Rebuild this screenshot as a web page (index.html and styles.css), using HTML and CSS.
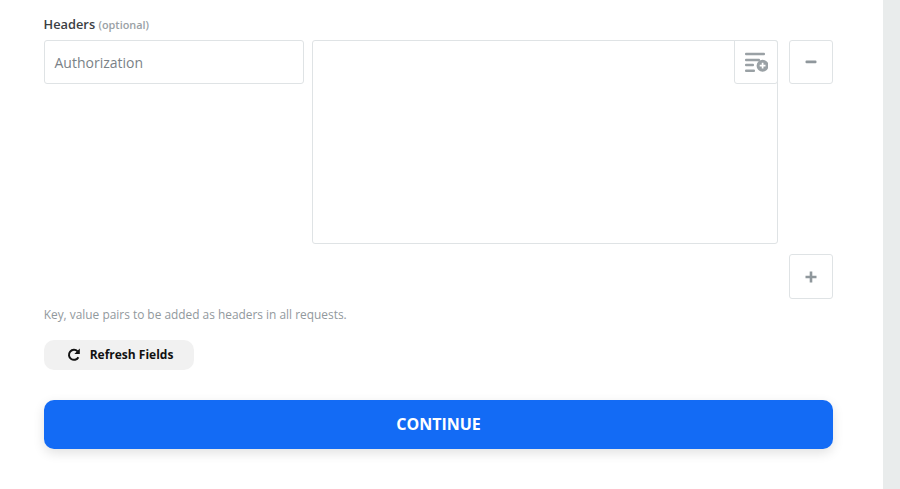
FILE: index.html
```html
<!DOCTYPE html>
<html lang="en">
<head>
<meta charset="utf-8">
<title>Headers</title>
<link rel="stylesheet" href="styles.css">
</head>
<body>
<div class="page">
  <main class="main">
    <div class="label">Headers <span class="optional">(optional)</span></div>
    <div class="row">
      <div class="key">Authorization</div>
      <div class="value">
        <button class="insert" aria-label="Insert field">
          <svg width="24" height="22" viewBox="0 0 24 22">
            <g fill="#9aa1a5">
              <rect x="1" y="1.8" width="20" height="2.4" rx="1"/>
              <rect x="1" y="7.8" width="15" height="2.4" rx="1"/>
              <rect x="1" y="12.8" width="9" height="2.4" rx="1"/>
              <rect x="1" y="18.5" width="10" height="2.4" rx="1"/>
              <circle cx="18.6" cy="14.7" r="6"/>
            </g>
            <path d="M18.6 11.8v5.8M15.7 14.7h5.8" stroke="#fff" stroke-width="1.7"/>
          </svg>
        </button>
      </div>
      <button class="square" aria-label="Remove">
        <svg width="12" height="12" viewBox="0 0 12 12"><rect x="0.5" y="4.6" width="11" height="2.6" rx="1" fill="#8f979c"/></svg>
      </button>
    </div>
    <div class="add-row">
      <button class="square square-tall" aria-label="Add">
        <svg width="12" height="12" viewBox="0 0 12 12"><path d="M4.7 0.5h2.6v4.2h4.2v2.6H7.3v4.2H4.7V7.3H0.5V4.7h4.2z" fill="#8f979c"/></svg>
      </button>
    </div>
    <p class="help">Key, value pairs to be added as headers in all requests.</p>
    <button class="refresh">
      <svg width="14" height="14" viewBox="0 0 14 14">
        <path d="M11.4 9.2A5 5 0 1 1 10.6 3.4" fill="none" stroke="#111" stroke-width="2"/>
        <path d="M12.8 0.6V6H7.4z" fill="#111"/>
      </svg>
      <span class="refresh-text">Refresh Fields</span>
    </button>
    <button class="continue">CONTINUE</button>
  </main>
  <aside class="side"></aside>
</div>
</body>
</html>
```
FILE: styles.css
```css
* { box-sizing: border-box; }
html, body { margin: 0; height: 489px; overflow: hidden; background: #fff; }
body { font-family: "Open Sans", "Liberation Sans", sans-serif; }
button { font-family: inherit; padding: 0; cursor: pointer; }
.page { display: flex; height: 489px; }
.main { flex: 1; padding: 15px 50px 0 44px; }
.side { width: 17px; background: #e9ecec; }
.label { font-size: 12.8px; font-weight: 600; line-height: 18px; color: #3b4043; height: 25px; margin-left: -0.4px; }
.optional { font-size: 10.9px; font-weight: 600; color: #9aa1a5; }
.row { display: flex; align-items: flex-start; }
.key {
  width: 260px; height: 44px; margin-right: 8px; padding: 0 9.5px;
  border: 1px solid #dfe3e5; border-radius: 3px;
  font-size: 14px; line-height: 43px; color: #7a8287;
}
.value {
  position: relative; width: 466px; height: 204px; margin-right: 11px;
  border: 1px solid #dfe3e5; border-radius: 3px;
}
.insert {
  position: absolute; top: -1px; right: -1px; width: 44px; height: 44px;
  display: flex; align-items: center; justify-content: center;
  background: #fff; border: 1px solid #dfe3e5; border-radius: 0 3px 3px 3px;
}
.square {
  width: 44px; height: 44px; flex: none;
  display: flex; align-items: center; justify-content: center;
  background: #fff; border: 1px solid #dfe3e5; border-radius: 3px;
}
.square-tall { height: 45px; }
.add-row { display: flex; justify-content: flex-end; margin-top: 10px; }
.help { margin: 7px 0 0; font-size: 11.9px; line-height: 17px; color: #92999d; margin-left: -0.3px; }
.refresh {
  display: flex; align-items: center; justify-content: center; gap: 9px;
  width: 150px; height: 30px; margin-top: 17px; padding-left: 2px;
  background: #f1f1f1; border: 0; border-radius: 10px;
  font-size: 12px; font-weight: 700; color: #111;
}
.refresh-text { margin-bottom: 2px; }
.continue {
  display: block; width: 789px; height: 49px; margin-top: 30px; padding-bottom: 1px;
  background: #136bf5; border: 0; border-radius: 10px;
  box-shadow: 0 4px 12px rgba(0,0,0,0.12);
  font-size: 16px; font-weight: 700; color: #fff;
}
```
